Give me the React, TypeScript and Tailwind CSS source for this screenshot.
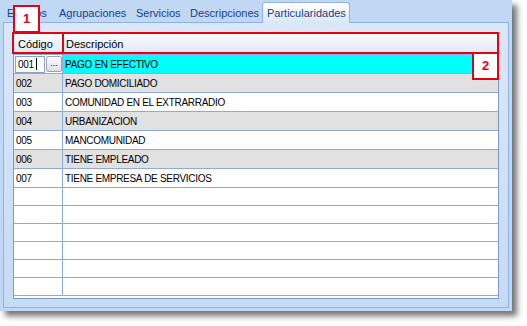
import React from "react";

const tabs = [
  { label: "Eventos", w: "w-[52px]" },
  { label: "Agrupaciones", w: "w-[77px]" },
  { label: "Servicios", w: "w-[54px]" },
  { label: "Descripciones", w: "w-[77px]" },
];

const rows = [
  ["001", "PAGO EN EFECTIVO"],
  ["002", "PAGO DOMICILIADO"],
  ["003", "COMUNIDAD EN EL EXTRARRADIO"],
  ["004", "URBANIZACION"],
  ["005", "MANCOMUNIDAD"],
  ["006", "TIENE EMPLEADO"],
  ["007", "TIENE EMPRESA DE SERVICIOS"],
];

function Row({ code, desc, index }: { code: string; desc: string; index: number }) {
  const shaded = index % 2 === 1;
  if (index === 0) {
    return (
      <div className="flex h-[19px] border-b border-[#8eaadb]">
        <div className="flex w-[49px] items-center gap-px border-r border-[#8eaadb] bg-white pl-px">
          <div className="flex h-[17px] w-[30px] items-center border border-[#8aa2c8] pl-[2px] text-[10px] tracking-[-0.3px]">
            001<span className="ml-[2px] h-[12px] w-px bg-black" />
          </div>
          <div className="flex h-[16px] w-[16px] items-end justify-center rounded-[2px] border border-[#9aa6b8] bg-gradient-to-b from-[#fdfdfd] to-[#dcdfe6] pb-[3px] text-[9px] leading-none">
            ...
          </div>
        </div>
        <div className="flex flex-1 items-center bg-[#00ffff] pl-[2px] text-[10px] tracking-[-0.3px]">{desc}</div>
      </div>
    );
  }
  return (
    <div className={`flex h-[19px] border-b border-[#8eaadb] ${shaded ? "bg-[#e1e1e1]" : "bg-white"}`}>
      <div className="flex w-[49px] items-center border-r border-[#8eaadb] pl-[2px] text-[10px] tracking-[-0.3px]">{code}</div>
      <div className="flex flex-1 items-center pl-[2px] text-[10px] tracking-[-0.3px]">{desc}</div>
    </div>
  );
}

export default function App() {
  return (
    <div className="relative h-[326px] w-[527px] bg-white font-['Liberation_Sans',Arial,sans-serif] text-black">
      <div className="flex h-[311px] w-[512px] flex-col bg-[#c1d8f5] shadow-[5px_5px_6px_rgba(0,0,0,0.55)]">
        {/* tab strip */}
        <div className="flex h-[22px] items-end pl-[2px]">
          {tabs.map((t) => (
            <div key={t.label} className={`${t.w} h-[20px] pl-[5px] pt-[3px] text-[11px] text-[#15428b]`}>
              {t.label}
            </div>
          ))}
          <div className="relative z-10 -mb-px h-[21px] w-[88px] rounded-t-[3px] border border-b-0 border-[#8db2e3] bg-gradient-to-b from-[#ffffff] to-[#dae7f8] pl-[4px] pt-[2px] text-[11px] text-[#15428b]">
            Particularidades
          </div>
        </div>

        {/* tab page */}
        <div className="mx-[3px] mb-[3px] flex flex-1 flex-col border border-[#8db2e3] bg-gradient-to-b from-[#dae7f8] to-[#c6dbf6] px-[9px] pb-[8px] pt-[10px]">
          <div className="flex flex-1 flex-col overflow-hidden border border-[#7a99c9] bg-white">
            <div className="flex h-[21px] border-b border-[#8eaadb] bg-gradient-to-b from-[#f9fbfe] to-[#dfe8f6] text-[11px]">
              <div className="flex w-[49px] items-center border-r border-[#8eaadb] pl-[4px]">Código</div>
              <div className="flex flex-1 items-center pl-[3px]">Descripción</div>
            </div>
            {rows.map(([c, d], i) => (
              <Row key={c} code={c} desc={d} index={i} />
            ))}
            {Array.from({ length: 6 }).map((_, i) => (
              <div key={i} className="flex h-[18px] shrink-0 border-b border-[#8eaadb]">
                <div className="w-[49px] border-r border-[#8eaadb]" />
                <div className="flex-1" />
              </div>
            ))}
          </div>
        </div>
      </div>

      {/* callout annotations */}
      <div className="absolute left-[13px] top-[5px] flex h-[28px] w-[27px] items-center justify-center border-2 border-[#e60012] bg-white text-[13px] font-bold text-[#e60012]">
        1
      </div>
      <div className="absolute left-[12px] top-[32px] h-[22px] w-[52px] border-2 border-[#e60012]" />
      <div className="absolute left-[62px] top-[32px] h-[22px] w-[437px] border-2 border-[#e60012]" />
      <div className="absolute left-[472px] top-[52px] flex h-[28px] w-[27px] items-center justify-center border-2 border-[#e60012] bg-white text-[13px] font-bold text-[#e60012]">
        2
      </div>
    </div>
  );
}
